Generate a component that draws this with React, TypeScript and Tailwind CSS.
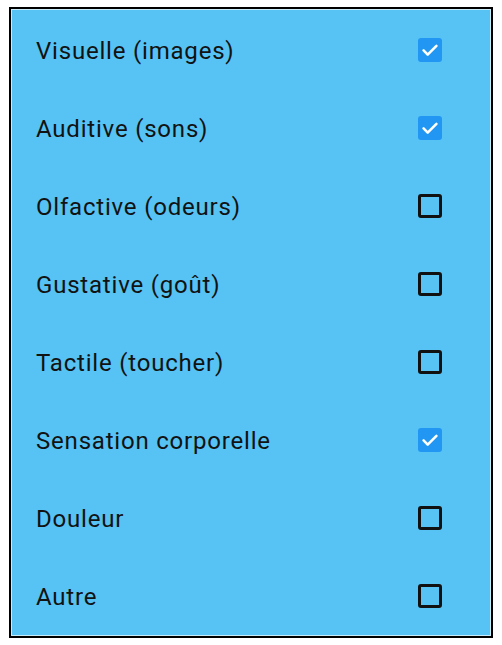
import React from "react";

const items: { label: string; checked: boolean }[] = [
  { label: "Visuelle (images)", checked: true },
  { label: "Auditive (sons)", checked: true },
  { label: "Olfactive (odeurs)", checked: false },
  { label: "Gustative (goût)", checked: false },
  { label: "Tactile (toucher)", checked: false },
  { label: "Sensation corporelle", checked: true },
  { label: "Douleur", checked: false },
  { label: "Autre", checked: false },
];

function Box({ checked }: { checked: boolean }) {
  if (checked) {
    return (
      <div className="w-6 h-6 rounded-[3px] bg-[#2196f3] flex items-center justify-center">
        <svg width="22" height="22" viewBox="0 0 24 24" fill="none">
          <path d="M5 12.5l4.5 4.5L19 7.5" stroke="white" strokeWidth="2.8" strokeLinecap="round" strokeLinejoin="round" />
        </svg>
      </div>
    );
  }
  return <div className="w-6 h-6 rounded-[3px] border-[3px] border-[#111]" />;
}

export default function App() {
  return (
    <div className="w-[502px] h-[645px] bg-white pt-[7px] pl-[9px]" style={{ fontFamily: "Roboto, sans-serif" }}>
      <div className="w-[484px] h-[631px] border-2 border-black">
        <div className="w-full h-full border border-[#c9ecfb] bg-[#56c3f4] flex flex-col pt-[1px]">
          {items.map((it) => (
            <div key={it.label} className="h-[78px] flex items-center pl-[24px] pr-[48px] shrink-0">
              <span className="flex-1 text-[24px] leading-none text-[#121212] tracking-[0.8px] pt-[1px]">{it.label}</span>
              <Box checked={it.checked} />
            </div>
          ))}
        </div>
      </div>
    </div>
  );
}
